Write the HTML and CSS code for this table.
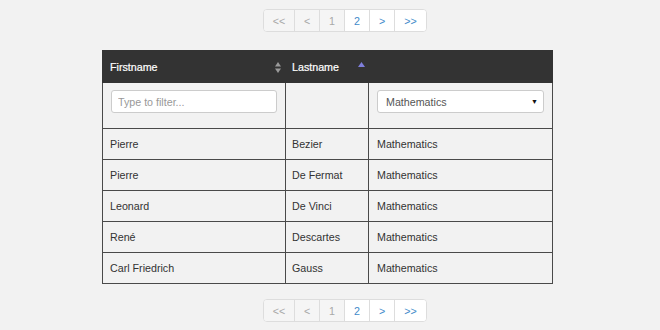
FILE: index.html
```html
<!DOCTYPE html>
<html>
<head>
<meta charset="utf-8">
<link rel="stylesheet" href="styles.css">
</head>
<body>
<nav class="pager">
  <span class="pg dis w-first">&lt;&lt;</span><span class="pg dis">&lt;</span><span class="pg dis">1</span><span class="pg">2</span><span class="pg">&gt;</span><span class="pg w-last">&gt;&gt;</span>
</nav>
<table class="grid">
  <colgroup><col class="c1"><col class="c2"><col class="c3"></colgroup>
  <thead>
    <tr class="head">
      <th><div class="th-in"><span>Firstname</span><svg class="sort-both" width="6" height="11" viewBox="0 0 6 11"><path d="M3 0L6 4.5H0Z" fill="#9a9a9a"/><path d="M3 11L6 6.5H0Z" fill="#9a9a9a"/></svg></div></th>
      <th><div class="th-in"><span>Lastname</span><svg class="sort-up" width="7" height="5" viewBox="0 0 7 5"><path d="M3.5 0L7 5H0Z" fill="#7f7fdc"/></svg></div></th>
      <th></th>
    </tr>
    <tr class="filters">
      <td><input class="fin" type="text" placeholder="Type to filter..."></td>
      <td></td>
      <td><div class="sel"><span>Mathematics</span><span class="caret">▼</span></div></td>
    </tr>
  </thead>
  <tbody>
    <tr><td>Pierre</td><td>Bezier</td><td>Mathematics</td></tr>
    <tr><td>Pierre</td><td>De Fermat</td><td>Mathematics</td></tr>
    <tr><td>Leonard</td><td>De Vinci</td><td>Mathematics</td></tr>
    <tr><td>René</td><td>Descartes</td><td>Mathematics</td></tr>
    <tr><td>Carl Friedrich</td><td>Gauss</td><td>Mathematics</td></tr>
  </tbody>
</table>
<nav class="pager bottom">
  <span class="pg dis w-first">&lt;&lt;</span><span class="pg dis">&lt;</span><span class="pg dis">1</span><span class="pg">2</span><span class="pg">&gt;</span><span class="pg w-last">&gt;&gt;</span>
</nav>
</body>
</html>
```
FILE: styles.css
```css
html, body {
  margin: 0;
  padding: 0;
  background: #f2f2f2;
  font-family: "Liberation Sans", Arial, sans-serif;
  font-size: 10.7px;
  color: #333;
}
.pager {
  display: flex;
  margin: 9px 0 0 263px;
  width: max-content;
  border: 1px solid #dddddd;
  border-radius: 4px;
  overflow: hidden;
  background: #fff;
}
.pager.bottom { margin-top: 15px; }
.pg {
  width: 25px;
  height: 21px;
  display: flex;
  align-items: center;
  justify-content: center;
  color: #428bca;
  background: #fff;
  border-left: 1px solid #dddddd;
  box-sizing: border-box;
}
.pg.w-first { border-left: 0; width: 30px; }
.pg.w-last { width: 32px; }
.pg.dis { color: #a8a8a8; background: #f5f5f5; }
.grid {
  margin: 18px 0 0 102px;
  width: 451px;
  border-collapse: collapse;
  table-layout: fixed;
  border: 1px solid #4a4a4a;
}
.c1 { width: 183px; }
.c2 { width: 83px; }
.grid td, .grid th {
  border: 1px solid #4a4a4a;
  padding: 0 8px;
  text-align: left;
  vertical-align: middle;
}
.grid td:first-child, .grid th:first-child { padding-left: 7px; }
.grid td:nth-child(2), .grid th:nth-child(2) { padding-left: 6px; }
.head th {
  background: #333333;
  color: #ffffff;
  font-weight: normal;
  height: 31px;
  border-color: #333333;
  -webkit-text-stroke: 0.2px #fff;
}
.th-in {
  display: flex;
  align-items: center;
  justify-content: space-between;
}
.sort-both { margin-right: -4px; margin-top: 1px; }
.sort-up { margin-right: -5px; margin-top: -5px; }
.filters td {
  height: 46px;
  vertical-align: top;
  padding-top: 7px;
  box-sizing: border-box;
}
.fin {
  box-sizing: border-box;
  width: 166px;
  height: 23px;
  margin: 0 0 0 1px;
  border: 1px solid #cccccc;
  border-radius: 3px;
  padding: 0 6px;
  font-family: inherit;
  font-size: 10.7px;
  color: #555;
  background: #fff;
  display: block;
}
.fin::placeholder { color: #999; }
.sel {
  box-sizing: border-box;
  width: 167px;
  height: 23px;
  border: 1px solid #cccccc;
  border-radius: 3px;
  background: #fff;
  padding: 0 5px 0 8px;
  display: flex;
  align-items: center;
  justify-content: space-between;
  color: #555;
}
.caret { font-size: 7px; color: #111; }
tbody td { height: 30px; }
```
